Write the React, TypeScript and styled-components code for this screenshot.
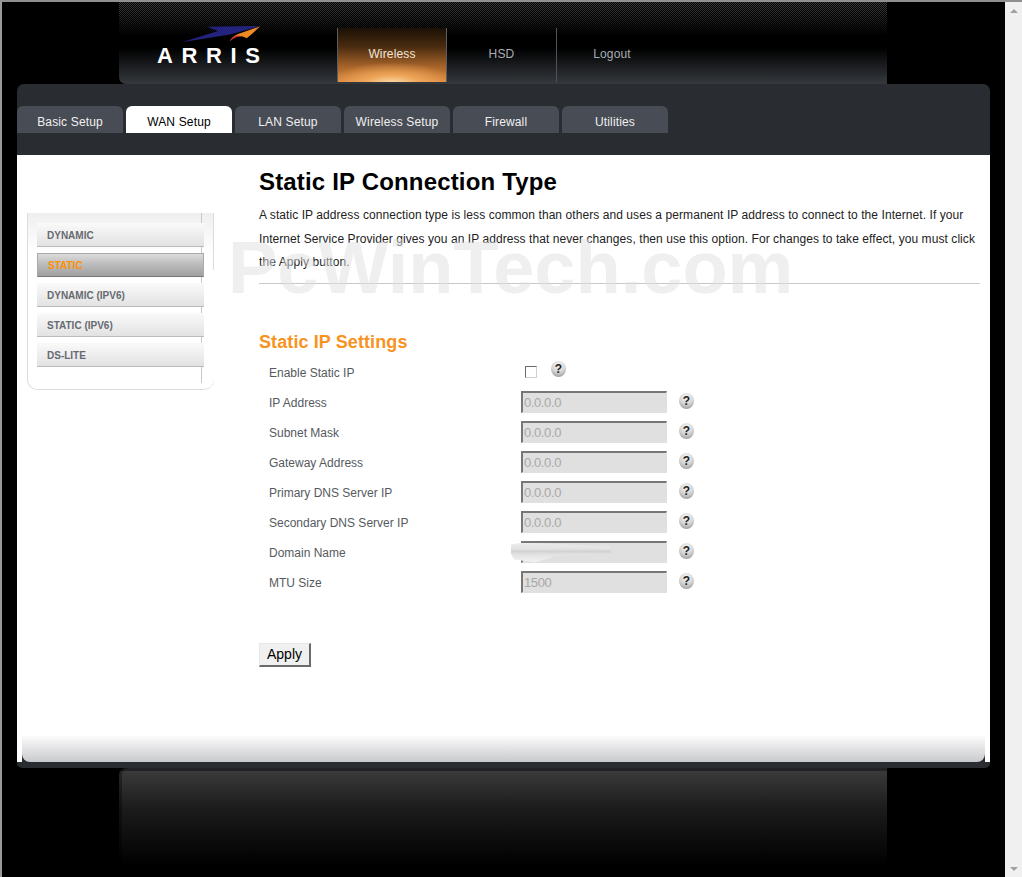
import React from 'react';
import styled, { createGlobalStyle } from 'styled-components';

const GlobalStyle = createGlobalStyle`
  html, body {
    margin: 0;
    height: 100%;
    overflow: hidden;
    background: #000;
    font-family: "Liberation Sans", Arial, sans-serif;
  }
  * { box-sizing: border-box; }
`;

const Window = styled.div`
  display: flex;
  height: 877px;
  border-top: 2px solid #8f8f8f;
  border-left: 2px solid #9a9a9a;
  background: #000;
`;

const Viewport = styled.div`
  flex: 1;
  display: flex;
  flex-direction: column;
  align-items: center;
`;

const Scrollbar = styled.div`
  width: 17px;
  background: #f0f0f0;
  display: flex;
  flex-direction: column;
  justify-content: space-between;
  align-items: center;
  padding: 7px 0 6px;
`;

const ArrowUp = styled.div`
  width: 0;
  height: 0;
  border-left: 4px solid transparent;
  border-right: 4px solid transparent;
  border-bottom: 4px solid #a0a0a0;
`;

const ArrowDown = styled.div`
  width: 0;
  height: 0;
  border-left: 4px solid transparent;
  border-right: 4px solid transparent;
  border-top: 4px solid #a0a0a0;
`;

const Header = styled.header`
  width: 768px;
  height: 82px;
  flex: none;
  margin-right: 1px;
  display: flex;
  border-bottom-left-radius: 7px;
  background: linear-gradient(to bottom, #000 0, #000 46px, #36393e 82px);
  position: relative;
  &::before {
    content: '';
    position: absolute;
    inset: 0 0 46px 0;
    background: repeating-conic-gradient(#3c3c3c 0 25%, #000 0 50%) 0 0 / 2px 2px;
    -webkit-mask-image: linear-gradient(to bottom, #000 0, #000 4px, transparent 34px);
    mask-image: linear-gradient(to bottom, #000 0, #000 4px, transparent 34px);
  }
`;

const LogoBox = styled.div`
  width: 218px;
  flex: none;
  position: relative;
  padding: 24px 0 0 38px;
`;

const LogoSwoosh = styled.svg`
  display: block;
  width: 80px;
  height: 18px;
  margin-left: 24px;
`;

const LogoText = styled.div`
  font-size: 22px;
  line-height: 20px;
  margin-top: 2px;
  font-weight: 700;
  letter-spacing: 8.6px;
  color: #fff;
`;

const Nav = styled.nav`
  display: flex;
  position: relative;
  padding-top: 26px;
  height: 80px;
`;

const NavItem = styled.a<{ $active?: boolean }>`
  width: 110px;
  height: 54px;
  display: flex;
  align-items: center;
  justify-content: center;
  padding-bottom: 2px;
  font-size: 12px;
  letter-spacing: 0.15px;
  color: ${(p) => (p.$active ? '#f2e6d8' : '#a9adb3')};
  ${(p) =>
    p.$active
      ? `background: radial-gradient(ellipse 62% 40% at 50% 104%, #fde3b4 0, rgba(240, 168, 90, 0.95) 42%, rgba(224, 132, 60, 0) 100%), linear-gradient(to bottom, #1a1006 0, #4a2c10 35%, #a8642a 72%, #d9853c 100%);
         border-left: 1px solid #5c5c5c;
         border-right: 1px solid #5c5c5c;`
      : `border-right: 1px solid #50545a;`}
  &:last-child {
    border-right: none;
  }
`;

const Panel = styled.main`
  width: 973px;
  height: 684px;
  flex: none;
  display: flex;
  flex-direction: column;
  background: #292c31;
  border-radius: 7px 7px 5px 5px;
  padding-bottom: 6px;
`;

const TabBar = styled.div`
  height: 71px;
  flex: none;
  padding-top: 22px;
  display: flex;
  align-items: flex-start;
  gap: 3px;
`;

const Tab = styled.a<{ $active?: boolean }>`
  width: 106px;
  height: 27px;
  display: flex;
  align-items: center;
  justify-content: center;
  padding-top: 5px;
  font-size: 12px;
  letter-spacing: 0.15px;
  border-radius: 6px 6px 0 0;
  background: ${(p) => (p.$active ? '#fff' : '#484c55')};
  color: ${(p) => (p.$active ? '#000' : '#f0f0f0')};
`;

const Content = styled.div`
  flex: 1;
  position: relative;
  background: #fff;
  display: flex;
  flex-direction: column;
  overflow: hidden;
`;

const Columns = styled.div`
  flex: 1;
  display: flex;
`;

const SideColumn = styled.aside`
  width: 242px;
  flex: none;
  padding: 58px 0 0 10px;
`;

const SideBox = styled.div`
  width: 187px;
  height: 177px;
  padding: 10px 0 0 9px;
  position: relative;
  display: flex;
  flex-direction: column;
  gap: 6px;
  border: 1px solid #dcdcdc;
  border-top: none;
  border-right: none;
  border-bottom-left-radius: 10px;
  border-bottom-right-radius: 10px;
  background: linear-gradient(to bottom, #efefef 0, #fff 40px);
  &::before {
    content: '';
    position: absolute;
    top: 0;
    bottom: 6px;
    left: 173px;
    width: 1px;
    background: #c8c8c8;
  }
  &::after {
    content: '';
    position: absolute;
    top: 0;
    right: 0;
    height: 57px;
    width: 1px;
    background: #dcdcdc;
  }
`;

const SideButton = styled.a<{ $active?: boolean }>`
  width: 167px;
  height: 24px;
  position: relative;
  z-index: 1;
  display: flex;
  align-items: center;
  padding: ${(p) => (p.$active ? '0' : '2px')} 0 0 10px;
  font-size: 10px;
  font-weight: 700;
  color: ${(p) => (p.$active ? '#ff9000' : '#666a70')};
  ${(p) =>
    p.$active
      ? `background: linear-gradient(to bottom, #dcdcdc 0, #bdbdbd 45%, #a0a0a0 100%);
         border: 1px solid #aaa;
         border-bottom: 1px solid #777;`
      : `background: linear-gradient(to bottom, #fafafa 0, #e2e2e2 100%);
         border-bottom: 1px solid #bbb;`}
`;

const MainColumn = styled.section`
  flex: 1;
  padding: 13px 10px 0 0;
  min-width: 0;
`;

const Title = styled.h1`
  margin: 0;
  font-size: 24px;
  line-height: 28px;
  font-weight: 700;
  letter-spacing: 0.17px;
  color: #000;
`;

const Intro = styled.p`
  margin: 8px 0 0;
  font-size: 12px;
  line-height: 23.5px;
  letter-spacing: 0.07px;
  color: #222;
`;

const Rule = styled.hr`
  margin: 8px 0 0;
  height: 1px;
  border: none;
  background: #c8c8c8;
`;

const SectionTitle = styled.h2`
  margin: 48px 0 0;
  font-size: 18px;
  line-height: 21px;
  font-weight: 700;
  letter-spacing: 0.1px;
  color: #f7931e;
`;

const Fields = styled.div`
  margin-top: 4px;
  display: flex;
  flex-direction: column;
`;

const FieldRow = styled.div`
  height: 30px;
  display: flex;
  align-items: center;
`;

const FieldLabel = styled.label`
  width: 262px;
  flex: none;
  padding: 2px 0 0 10px;
  font-size: 12px;
  color: #555a60;
`;

const InputWrap = styled.div`
  position: relative;
  display: flex;
`;

const TextField = styled.input`
  width: 146px;
  height: 22px;
  margin: 0;
  padding: 0 0 0 1px;
  font-family: "Liberation Sans", Arial, sans-serif;
  font-size: 13px;
  letter-spacing: -0.4px;
  color: #a8a8a8;
  background: #e0e0e0;
  border-style: solid;
  border-width: 2px 1px 1px 2px;
  border-color: #777 #e0e0e0 #e0e0e0 #777;
  border-radius: 0;
  outline: none;
`;

const Smear = styled.div`
  position: absolute;
  left: -10px;
  top: 2px;
  width: 100px;
  height: 20px;
  background: linear-gradient(to bottom, #ececec 0, #e2e2e2 30%, #d2d2d2 42%, #e2e2e2 58%, #f4f4f4 100%);
  clip-path: polygon(0 10%, 12% 0, 100% 20%, 100% 60%, 45% 68%, 24% 100%, 3% 85%, 0 55%);
  filter: blur(0.7px);
`;

const CheckBox = styled.input`
  appearance: none;
  width: 12px;
  height: 12px;
  margin: 0 0 0 4px;
  background: #fff;
  border-style: solid;
  border-width: 1px;
  border-color: #6a6a6a #d0d0d0 #d0d0d0 #6a6a6a;
`;

const Help = styled.span<{ $nudge?: boolean }>`
  width: 15px;
  height: 16px;
  flex: none;
  display: flex;
  align-items: center;
  justify-content: center;
  margin-left: ${(p) => (p.$nudge ? '14px' : '12px')};
  margin-bottom: ${(p) => (p.$nudge ? '6px' : '2px')};
  border-radius: 50%;
  background: radial-gradient(circle at 50% 25%, #f4f4f4 0, #d4d4d4 50%, #8c8c8c 100%);
  font-size: 12px;
  font-weight: 700;
  color: #222;
`;

const ApplyButton = styled.button`
  display: block;
  margin-top: 46px;
  width: 52px;
  height: 24px;
  padding: 0;
  font-family: "Liberation Sans", Arial, sans-serif;
  font-size: 14px;
  color: #000;
  background: #f0f0f0;
  border-style: solid;
  border-width: 1px 2px 2px 1px;
  border-color: #e8e8e8 #6a6a6a #6a6a6a #e8e8e8;
`;

const BottomTrack = styled.div`
  height: 27px;
  flex: none;
  margin: 0 5px;
  background: linear-gradient(to bottom, #fff 0, #fff 17px, #292c31 17px);
`;

const BottomFade = styled.div`
  height: 100%;
  border-radius: 0 0 8px 8px;
  background: linear-gradient(to bottom, #fff 0, #f0f0f1 25%, #c9cacd 100%);
`;

const Watermark = styled.div`
  position: absolute;
  left: 211px;
  top: 75px;
  font-size: 74px;
  line-height: 76px;
  font-weight: 700;
  white-space: nowrap;
  color: rgba(224, 224, 224, 0.5);
  pointer-events: none;
`;

const Footer = styled.footer`
  width: 768px;
  height: 97px;
  flex: none;
  margin-right: 1px;
  border-radius: 7px 0 0 0;
  box-shadow: inset 3px 0 0 rgba(0, 0, 0, 0.35);
  background: linear-gradient(to bottom, #202226 0, #202226 3px, #3a3a3a 3px, #1c1c1c 40px, #000 97px);
`;

const fields = [
  { label: 'IP Address', value: '0.0.0.0' },
  { label: 'Subnet Mask', value: '0.0.0.0' },
  { label: 'Gateway Address', value: '0.0.0.0' },
  { label: 'Primary DNS Server IP', value: '0.0.0.0' },
  { label: 'Secondary DNS Server IP', value: '0.0.0.0' },
  { label: 'Domain Name', value: '', hidden: true },
  { label: 'MTU Size', value: '1500' },
];

const tabs = ['Basic Setup', 'WAN Setup', 'LAN Setup', 'Wireless Setup', 'Firewall', 'Utilities'];
const sideItems = ['DYNAMIC', 'STATIC', 'DYNAMIC (IPV6)', 'STATIC (IPV6)', 'DS-LITE'];

function App() {
  return (
    <Window>
      <GlobalStyle />
      <Viewport>
        <Header>
          <LogoBox>
            <LogoSwoosh viewBox="0 0 80 18">
              <path d="M0.7 16.3 L37 5 L26 0.7 L79 0 L49 8.5 Z" fill="#23237e" />
              <path d="M49 15 C52 10 56 8 60 7 L79 0.5 C74 5 70 9 65.7 12.3 C62 10.5 58 9.5 55 10.5 C53 11.5 51 13 49 15 Z" fill="#f08a24" />
              <path d="M49 15 C51 11 54 9.5 58 9.5 L60 10.5 C56 10.5 52 12.5 49 15 Z" fill="#d92b2b" />
            </LogoSwoosh>
            <LogoText>ARRIS</LogoText>
          </LogoBox>
          <Nav>
            <NavItem $active>Wireless</NavItem>
            <NavItem>HSD</NavItem>
            <NavItem>Logout</NavItem>
          </Nav>
        </Header>
        <Panel>
          <TabBar>
            {tabs.map((tab) => (
              <Tab key={tab} $active={tab === 'WAN Setup'}>{tab}</Tab>
            ))}
          </TabBar>
          <Content>
            <Columns>
              <SideColumn>
                <SideBox>
                  {sideItems.map((item) => (
                    <SideButton key={item} $active={item === 'STATIC'}>{item}</SideButton>
                  ))}
                </SideBox>
              </SideColumn>
              <MainColumn>
                <Title>Static IP Connection Type</Title>
                <Intro>
                  A static IP address connection type is less common than others and uses a permanent IP address to connect to the Internet. If your
                  Internet Service Provider gives you an IP address that never changes, then use this option. For changes to take effect, you must click
                  the Apply button.
                </Intro>
                <Rule />
                <SectionTitle>Static IP Settings</SectionTitle>
                <Fields>
                  <FieldRow>
                    <FieldLabel>Enable Static IP</FieldLabel>
                    <CheckBox type="checkbox" />
                    <Help $nudge>?</Help>
                  </FieldRow>
                  {fields.map((field) => (
                    <FieldRow key={field.label}>
                      <FieldLabel>{field.label}</FieldLabel>
                      <InputWrap>
                        <TextField disabled defaultValue={field.value} />
                        {field.hidden && <Smear />}
                      </InputWrap>
                      <Help>?</Help>
                    </FieldRow>
                  ))}
                </Fields>
                <ApplyButton>Apply</ApplyButton>
              </MainColumn>
            </Columns>
            <BottomTrack>
              <BottomFade />
            </BottomTrack>
            <Watermark>PcWinTech.com</Watermark>
          </Content>
        </Panel>
        <Footer />
      </Viewport>
      <Scrollbar>
        <ArrowUp />
        <ArrowDown />
      </Scrollbar>
    </Window>
  );
}

export default App;
